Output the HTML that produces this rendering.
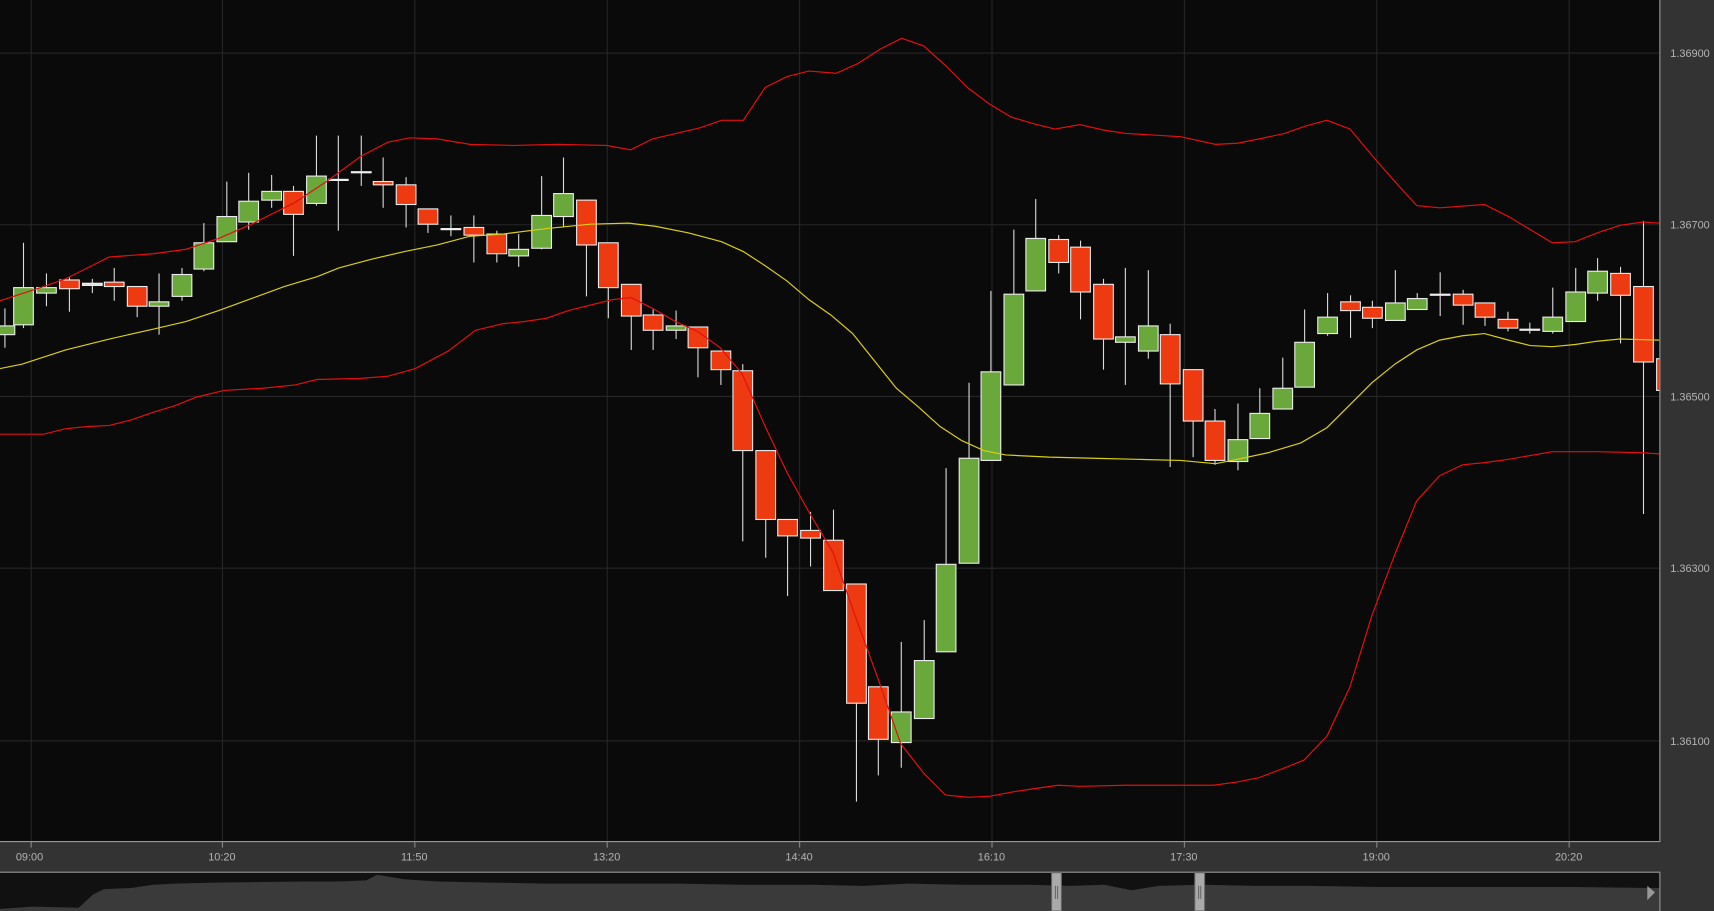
<!DOCTYPE html>
<html><head><meta charset="utf-8"><style>
html,body{margin:0;padding:0;background:#333;overflow:hidden;width:1714px;height:911px}
svg{display:block}
text{font-family:"Liberation Sans",sans-serif;font-size:10px;fill:#b4b4b4}
</style></head><body>
<svg width="1714" height="911" viewBox="0 0 1568 833" preserveAspectRatio="none" xmlns="http://www.w3.org/2000/svg">
<defs><clipPath id="pc"><rect x="0" y="0" width="1518" height="769"/></clipPath></defs>
<rect x="0" y="0" width="1568" height="833" fill="#333"/>
<rect x="0" y="0" width="1518" height="769" fill="#0a0a0a"/>
<g stroke="#262626" stroke-width="1">
<line x1="0" y1="48.5" x2="1518" y2="48.5"/><line x1="0" y1="205.5" x2="1518" y2="205.5"/><line x1="0" y1="362.5" x2="1518" y2="362.5"/><line x1="0" y1="519.5" x2="1518" y2="519.5"/><line x1="0" y1="677.5" x2="1518" y2="677.5"/>
<line x1="28.5" y1="0" x2="28.5" y2="769"/><line x1="203.5" y1="0" x2="203.5" y2="769"/><line x1="379.5" y1="0" x2="379.5" y2="769"/><line x1="555.5" y1="0" x2="555.5" y2="769"/><line x1="731.5" y1="0" x2="731.5" y2="769"/><line x1="907.5" y1="0" x2="907.5" y2="769"/><line x1="1083.5" y1="0" x2="1083.5" y2="769"/><line x1="1259.5" y1="0" x2="1259.5" y2="769"/><line x1="1435.5" y1="0" x2="1435.5" y2="769"/>
</g>
<g id="candles" clip-path="url(#pc)"></g>
<polyline fill="none" stroke="#e01010" stroke-width="1.1" points="0,275 40,262 60,255 100,235 140,232 170,228 200,218 230,205 270,185 300,165 330,143 355,130 375,126 400,127 430,132 470,133 510,132 555,133 577,137 597,127 640,117 660,110 680,110 700,80 720,70 740,65 765,67 785,58 805,45 825,35 845,42 865,60 885,80 905,95 925,107 945,113 965,118 988,114 1010,119 1030,122 1080,125 1112,132 1132,131 1152,127 1175,122 1195,115 1214,110 1235,118 1255,142 1276,166 1296,188 1317,190 1358,187 1380,198 1420,222 1441,221 1461,213 1482,206 1503,203 1518,204"/>
<polyline fill="none" stroke="#d8d010" stroke-width="1.1" points="0,337 20,333 60,320 100,310 140,301 170,294 200,284 230,273 260,262 290,253 310,245 340,237 370,230 400,224 430,216 460,214 500,209 540,205 575,204 600,207 630,213 660,221 680,230 700,243 720,257 740,274 760,288 780,305 800,330 820,355 840,372 860,390 880,403 900,412 920,416 960,418 1000,419 1040,420 1080,421 1112,424 1132,420 1160,414 1190,405 1214,391 1235,370 1255,350 1276,333 1296,320 1317,311 1338,307 1358,305 1380,311 1400,316 1420,317 1441,315 1461,312 1482,310 1518,311"/>
<polyline fill="none" stroke="#e01010" stroke-width="1.1" points="0,397 40,397 60,392 80,390 100,389 120,384 140,377 160,371 180,363 205,357 240,355 270,352 290,347 330,346 355,344 380,337 410,321 435,302 460,296 480,294 500,291 520,284 540,279 560,274 577,272 597,282 618,294 638,303 659,318 679,342 700,390 720,432 741,470 762,505 783,565 803,620 824,680 845,707 865,727 886,729 906,728 927,724 947,721 968,718 988,719 1030,718 1070,718 1110,718 1132,715 1152,711 1173,703 1193,695 1214,673 1235,628 1255,563 1276,507 1296,458 1317,435 1338,425 1358,423 1380,420 1420,413 1461,413 1503,414 1518,415"/>
<g>
<text x="1528" y="52">1.36900</text><text x="1528" y="209">1.36700</text><text x="1528" y="366">1.36500</text><text x="1528" y="523">1.36300</text><text x="1528" y="681">1.36100</text>
</g>
<line x1="0" y1="769.5" x2="1518" y2="769.5" stroke="#999"/>
<line x1="1518.5" y1="0" x2="1518.5" y2="770" stroke="#999"/>
<g stroke="#888"><line x1="28.5" y1="769" x2="28.5" y2="775"/><line x1="203.5" y1="769" x2="203.5" y2="775"/><line x1="379.5" y1="769" x2="379.5" y2="775"/><line x1="555.5" y1="769" x2="555.5" y2="775"/><line x1="731.5" y1="769" x2="731.5" y2="775"/><line x1="907.5" y1="769" x2="907.5" y2="775"/><line x1="1083.5" y1="769" x2="1083.5" y2="775"/><line x1="1259.5" y1="769" x2="1259.5" y2="775"/><line x1="1435.5" y1="769" x2="1435.5" y2="775"/></g>
<g>
<text x="27" y="787" text-anchor="middle">09:00</text><text x="203" y="787" text-anchor="middle">10:20</text><text x="379" y="787" text-anchor="middle">11:50</text><text x="555" y="787" text-anchor="middle">13:20</text><text x="731" y="787" text-anchor="middle">14:40</text><text x="907" y="787" text-anchor="middle">16:10</text><text x="1083" y="787" text-anchor="middle">17:30</text><text x="1259" y="787" text-anchor="middle">19:00</text><text x="1435" y="787" text-anchor="middle">20:20</text>
</g>
<rect x="0" y="797" width="1518" height="36" fill="#111"/>
<path fill="#3a3a3a" d="M0,831 L30,829 L72,830 L85,818 L95,813 L120,812 L140,809 L160,808 L195,807 L280,806 L310,806 L335,805 L345,800 L352,801 L370,804 L400,806 L450,807 L500,808 L560,808 L620,808 L680,809 L740,809 L790,810 L830,808 L880,809 L940,809 L980,810 L1010,809 L1035,814 L1060,810 L1100,809 L1150,810 L1200,810 L1260,811 L1320,811 L1380,811 L1440,811 L1518,812 L1518,833 L0,833 Z"/>
<line x1="0" y1="797.5" x2="1518" y2="797.5" stroke="#999"/>
<line x1="1518.5" y1="797" x2="1518.5" y2="833" stroke="#999"/>
<rect x="962" y="798" width="9" height="35" fill="#aaa" stroke="#666"/><line x1="965.5" y1="810" x2="965.5" y2="822" stroke="#666"/><line x1="967.5" y1="810" x2="967.5" y2="822" stroke="#666"/>
<rect x="1093" y="798" width="9" height="35" fill="#aaa" stroke="#666"/><line x1="1096.5" y1="810" x2="1096.5" y2="822" stroke="#666"/><line x1="1098.5" y1="810" x2="1098.5" y2="822" stroke="#666"/>
<path d="M1507,810 L1514,816 L1507,823 Z" fill="#999"/>
</svg>
<script>
var c=[[4,'g',298,306,282,318],[21,'g',263,297,222,300],[42,'g',263,268,250,280],[63,'r',256,264,253,285],[84,'d',259,261,255,268],[104,'r',258,262,245,275],[125,'r',262,280,262,290],[145,'g',276,280,250,306],[166,'g',251,271,245,275],[186,'g',222,246,204,248],[207,'g',198,221,166,221],[227,'g',184,203,158,210],[248,'g',175,183,160,190],[268,'r',175,196,170,234],[289,'g',161,186,124,188],[309,'d',164,164,124,211],[330,'d',157,157,124,170],[350,'r',166,169,144,190],[371,'r',169,187,162,208],[391,'r',191,205,191,213],[412,'d',209,209,197,216],[433,'r',208,215,197,240],[454,'r',214,232,211,240],[474,'g',228,234,214,244],[495,'g',197,227,161,228],[515,'g',177,198,144,208],[536,'r',183,224,183,271],[556,'r',222,263,222,291],[577,'r',260,289,260,320],[597,'r',288,302,283,320],[618,'g',298,302,284,310],[638,'r',299,318,299,345],[659,'r',321,338,321,352],[679,'r',339,412,333,495],[700,'r',412,475,412,510],[720,'r',475,490,475,545],[741,'r',485,492,468,518],[762,'r',494,540,466,540],[783,'r',534,643,534,733],[803,'r',628,676,628,709],[824,'g',651,679,587,702],[845,'g',604,657,567,657],[865,'g',516,596,428,596],[886,'g',419,515,350,515],[906,'g',340,421,266,421],[927,'g',269,352,210,352],[947,'g',218,266,182,266],[968,'r',219,240,215,250],[988,'r',226,267,220,292],[1009,'r',260,310,255,338],[1029,'g',308,313,245,352],[1050,'g',298,321,247,328],[1070,'r',306,351,296,427],[1091,'r',338,385,338,418],[1111,'r',385,421,374,425],[1132,'g',402,422,369,430],[1152,'g',378,401,355,401],[1173,'g',355,374,327,374],[1193,'g',313,354,283,354],[1214,'g',290,305,268,307],[1235,'r',276,284,270,309],[1255,'r',281,291,275,300],[1276,'g',277,293,247,293],[1296,'g',273,283,268,283],[1317,'d',269,269,249,289],[1338,'r',269,279,265,297],[1358,'r',277,290,277,298],[1379,'r',292,300,285,303],[1399,'d',301,301,295,305],[1420,'g',290,303,263,305],[1441,'g',267,294,245,294],[1461,'g',248,268,236,275],[1482,'r',250,270,244,314],[1503,'r',262,331,202,470],[1524,'r',328,357,328,357]];
var s='';c.forEach(function(k){var x=k[0];s+='<line x1="'+(x+.5)+'" y1="'+k[4]+'" x2="'+(x+.5)+'" y2="'+k[5]+'" stroke="#ddd" stroke-width="1"/>';var f=k[1]=='g'?'#6aa83c':k[1]=='r'?'#ee3a10':'#ddd';var h=Math.max(k[3]-k[2],1);s+='<rect x="'+(x-8.5)+'" y="'+k[2]+'" width="18" height="'+h+'" fill="'+f+'" stroke="#eee" stroke-width="1"/>';});
document.getElementById('candles').innerHTML=s;
</script>
</body></html>
